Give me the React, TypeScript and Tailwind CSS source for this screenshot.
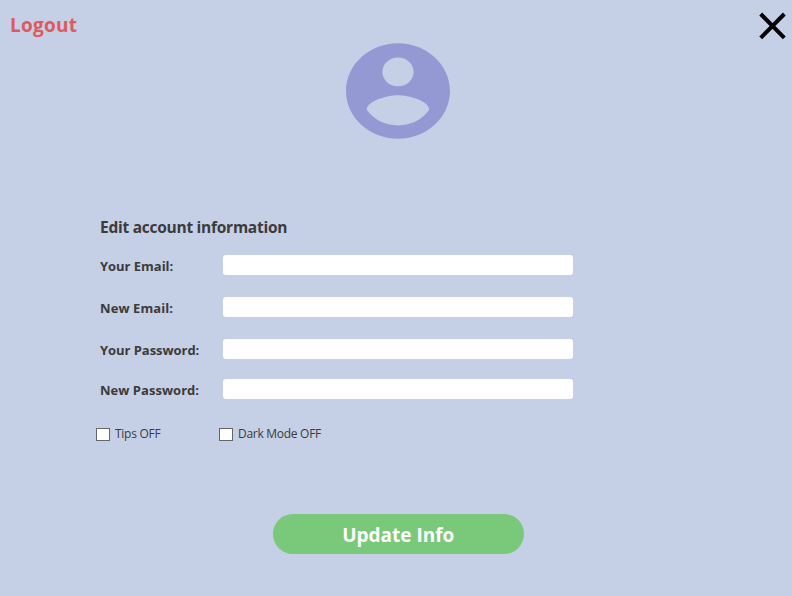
const fields = [
  { label: 'Your Email:', gap: 'mt-[22px]', tracking: 'tracking-[-0.03px]' },
  { label: 'New Email:', gap: 'mt-[22px]', tracking: 'tracking-[0.08px]' },
  { label: 'Your Password:', gap: 'mt-[20px]', tracking: 'tracking-[-0.05px]' },
  { label: 'New Password:', gap: '', tracking: 'tracking-[0.03px]' },
];

export default function App() {
  return (
    <main className="flex h-[596px] w-[792px] flex-col overflow-hidden bg-[#c5cfe6] font-['Open_Sans','Noto_Sans',sans-serif] text-[#3b3b3b]">
      <header className="flex h-[43px] shrink-0 items-start justify-between pl-[10px] pr-[6px] pt-[12px]">
        <button className="mt-[3px] whitespace-nowrap text-[19px] font-bold leading-5 tracking-[0.25px] text-[#df5a5e]">Logout</button>
        <button aria-label="Close" className="block">
          <svg width="27" height="28" viewBox="0 0 27 28" className="block">
            <path d="M1.7 2 25.3 25.8M25.3 2 1.7 25.8" stroke="#000" strokeWidth="4" />
          </svg>
        </button>
      </header>
      <svg width="104" height="96" viewBox="2 1.95 20 20.1" preserveAspectRatio="none" className="ml-[346px] block shrink-0">
        <path fill="#9499d3" d="M12 2C6.48 2 2 6.48 2 12s4.48 10 10 10 10-4.48 10-10S17.52 2 12 2zm0 3c1.66 0 3 1.34 3 3s-1.34 3-3 3-3-1.34-3-3 1.34-3 3-3zm0 14.2c-2.5 0-4.71-1.28-6-3.22.03-1.99 4-3.08 6-3.08 1.99 0 5.97 1.09 6 3.08-1.29 1.94-3.5 3.22-6 3.22z" />
      </svg>
      <section className="ml-[100px] mt-[78px] w-[473px]">
        <h1 className="h-[38px] whitespace-nowrap text-[15.5px] font-bold leading-5 tracking-[-0.26px]">Edit account information</h1>
        {fields.map((f, i) => (
          <label key={f.label} className={`flex h-5 justify-between ${i ? fields[i - 1].gap : ''}`}>
            <span className={`mt-px whitespace-nowrap text-[13px] font-bold leading-5 ${f.tracking}`}>{f.label}</span>
            <input className="h-5 w-[350px] rounded-[3px] bg-white px-1 text-xs outline-none" />
          </label>
        ))}
      </section>
      <div className="ml-[96px] mt-[25px] flex h-5 text-[12px] leading-5">
        <label className="flex w-[123px] gap-[5px]">
          <input type="checkbox" className="mt-[4px] h-[13px] w-[14px] appearance-none border border-[#666] bg-white" />
          <span className="whitespace-nowrap tracking-[-0.28px]">Tips OFF</span>
        </label>
        <label className="flex gap-[5px]">
          <input type="checkbox" className="mt-[4px] h-[13px] w-[14px] appearance-none border border-[#666] bg-white" />
          <span className="whitespace-nowrap tracking-[-0.28px]">Dark Mode OFF</span>
        </label>
      </div>
      <button className="ml-[273px] mt-[70px] flex h-[39.5px] w-[250.5px] shrink-0 items-start justify-center rounded-[20px] bg-[#7ac97b] pt-[11px] text-[19px] font-bold leading-5 text-white">
        <span className="whitespace-nowrap">Update Info</span>
      </button>
    </main>
  );
}
